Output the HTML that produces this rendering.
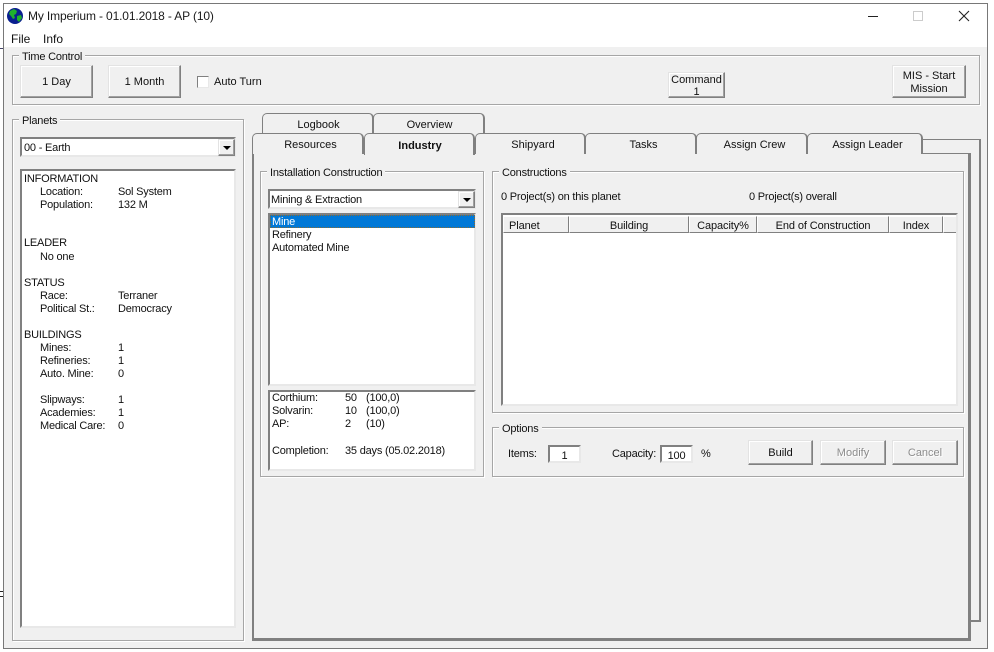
<!DOCTYPE html>
<html><head><meta charset="utf-8"><style>
html,body{margin:0;padding:0;background:#fff;width:994px;height:652px;overflow:hidden}
body{position:relative;font:11px/13px "Liberation Sans",sans-serif;color:#111;letter-spacing:-.2px}
div,span{position:absolute;box-sizing:border-box}
span{white-space:nowrap;margin-top:1px}
.grp{border:1px solid #a6a6a6;box-shadow:inset 1px 1px 0 #fff,1px 1px 0 #fff}
.lg{background:#f0f0f0;padding:0 3px;top:-6px;left:6px}
.btn{background:#f0f0f0;border:1px solid;border-color:#e3e3e3 #808080 #808080 #e3e3e3;box-shadow:inset -1px -1px 0 #a0a0a0,inset 1px 1px 0 #fff;text-align:center;letter-spacing:0}
.btn i{position:absolute;left:0;right:0;font-style:normal}
.sunk{background:#fff;border:2px solid;border-color:#808080 #e8e8e8 #e8e8e8 #808080}
.tab{background:#f0f0f0;border:1px solid #808080;border-bottom:none;border-right-width:2px;border-radius:5px 5px 0 0;text-align:center;letter-spacing:0}
.tab i{position:absolute;left:3px;right:-3px;font-style:normal;top:5px}
.th{top:216px;height:17px;background:#f0f0f0;border:1px solid;border-color:#fff #808080 #808080 #fff;text-align:center;padding-top:3px;letter-spacing:-.1px}
.arrow{width:0;height:0;border:4px solid transparent;border-top:4px solid #000;border-bottom:0}
.dis{color:#8c8c8c;text-shadow:1px 1px 0 #fff}
</style></head><body>
<!-- window -->
<div style="left:3px;top:3px;width:985px;height:646px;background:#f0f0f0;border:1px solid #787878"></div>
<div style="left:4px;top:4px;width:983px;height:43px;background:#fff"></div>
<svg style="position:absolute;left:7px;top:8px" width="16" height="16" viewBox="0 0 16 16"><circle cx="8" cy="8" r="8" fill="#0a1f8f"/><path d="M3 3L7 1L10 3L9 6L7 7L8 10L6 11L4 8L2 6Z" fill="#1fb02c"/><path d="M10 8L14 7L15 10L12 14L10 12Z" fill="#1fb02c"/></svg>
<span style="left:28px;top:9px;font-size:12px;letter-spacing:-.14px;color:#1a1a1a">My Imperium - 01.01.2018 - AP (10)</span>
<span style="left:11px;top:32px;font-size:12px;letter-spacing:0">File</span>
<span style="left:43px;top:32px;font-size:12px;letter-spacing:0">Info</span>
<svg style="position:absolute;left:860px;top:8px" width="120" height="20"><path d="M8 8.5H18" stroke="#222"/><rect x="53.5" y="3.5" width="9" height="9" fill="none" stroke="#ccc"/><path d="M99 3L109 13M109 3L99 13" stroke="#222" stroke-width="1.1"/></svg>
<div style="left:0;top:48px;width:3px;height:4px;border-top:1px solid #446"></div>
<div style="left:0;top:591px;width:3px;height:6px;border-top:1px solid #222;border-bottom:1px solid #222"></div>

<!-- time control -->
<div class="grp" style="left:12px;top:55px;width:968px;height:50px"><span class="lg">Time Control</span></div>
<div class="btn" style="left:20px;top:65px;width:73px;height:33px"><i style="top:10px">1 Day</i></div>
<div class="btn" style="left:108px;top:65px;width:73px;height:33px"><i style="top:10px">1 Month</i></div>
<div class="sunk" style="left:197px;top:76px;width:12px;height:12px;border-width:1px"></div>
<span style="left:214px;top:75px;letter-spacing:0">Auto Turn</span>
<div class="btn" style="left:668px;top:72px;width:57px;height:26px;overflow:hidden"><i style="top:1px">Command</i><i style="top:13px">1</i></div>
<div class="btn" style="left:892px;top:65px;width:74px;height:33px"><i style="top:4px">MIS - Start</i><i style="top:17px">Mission</i></div>

<!-- planets -->
<div class="grp" style="left:12px;top:119px;width:232px;height:522px"><span class="lg">Planets</span></div>
<div class="sunk" style="left:20px;top:137px;width:216px;height:20px"></div>
<span style="left:24px;top:141px">00 - Earth</span>
<div class="btn" style="left:218px;top:139px;width:17px;height:17px"><div class="arrow" style="left:4px;top:6px"></div></div>
<div class="sunk" style="left:20px;top:169px;width:216px;height:459px"></div>
<span style="left:24px;top:172px">INFORMATION</span>
<span style="left:40px;top:185px">Location:</span><span style="left:118px;top:185px">Sol System</span>
<span style="left:40px;top:198px">Population:</span><span style="left:118px;top:198px">132 M</span>
<span style="left:24px;top:236px">LEADER</span>
<span style="left:40px;top:250px">No one</span>
<span style="left:24px;top:276px">STATUS</span>
<span style="left:40px;top:289px">Race:</span><span style="left:118px;top:289px">Terraner</span>
<span style="left:40px;top:302px">Political St.:</span><span style="left:118px;top:302px">Democracy</span>
<span style="left:24px;top:328px">BUILDINGS</span>
<span style="left:40px;top:341px">Mines:</span><span style="left:118px;top:341px">1</span>
<span style="left:40px;top:354px">Refineries:</span><span style="left:118px;top:354px">1</span>
<span style="left:40px;top:367px">Auto. Mine:</span><span style="left:118px;top:367px">0</span>
<span style="left:40px;top:393px">Slipways:</span><span style="left:118px;top:393px">1</span>
<span style="left:40px;top:406px">Academies:</span><span style="left:118px;top:406px">1</span>
<span style="left:40px;top:419px">Medical Care:</span><span style="left:118px;top:419px">0</span>

<!-- tab pages -->
<div style="left:922px;top:139px;width:59px;height:483px;border:solid #808080;border-width:1px 2px 2px 0"></div>
<div class="tab" style="left:262px;top:113px;width:112px;height:21px"><i style="left:1px;right:-1px">Logbook</i></div>
<div class="tab" style="left:373px;top:113px;width:112px;height:21px"><i style="left:1px;right:-1px">Overview</i></div>
<div style="left:252px;top:153px;width:719px;height:488px;background:#f0f0f0;border:solid #808080;border-width:1px 3px 3px 2px"></div>
<div class="tab" style="left:252px;top:133px;width:112px;height:21px"><i>Resources</i></div>
<div class="tab" style="left:475px;top:133px;width:111px;height:21px"><i>Shipyard</i></div>
<div class="tab" style="left:585px;top:133px;width:112px;height:21px"><i>Tasks</i></div>
<div class="tab" style="left:696px;top:133px;width:112px;height:21px"><i>Assign Crew</i></div>
<div class="tab" style="left:807px;top:133px;width:116px;height:21px"><i>Assign Leader</i></div>
<div class="tab" style="left:364px;top:133px;width:111px;height:22px"><i style="font-weight:bold;top:6px;left:1px;right:-1px">Industry</i></div>

<!-- installation -->
<div class="grp" style="left:260px;top:171px;width:224px;height:306px"><span class="lg">Installation Construction</span></div>
<div class="sunk" style="left:268px;top:189px;width:208px;height:20px"></div>
<span style="left:271px;top:193px">Mining &amp; Extraction</span>
<div class="btn" style="left:458px;top:191px;width:17px;height:17px"><div class="arrow" style="left:4px;top:6px"></div></div>
<div class="sunk" style="left:268px;top:213px;width:208px;height:173px"></div>
<div style="left:270px;top:215px;width:205px;height:13px;background:#0078d7;outline:1px dotted #8a6a30;outline-offset:-1px"></div>
<span style="left:272px;top:215px;color:#fff">Mine</span>
<span style="left:272px;top:228px">Refinery</span>
<span style="left:272px;top:241px">Automated Mine</span>
<div class="sunk" style="left:268px;top:390px;width:208px;height:81px"></div>
<span style="left:272px;top:391px">Corthium:</span><span style="left:345px;top:391px">50</span><span style="left:366px;top:391px">(100,0)</span>
<span style="left:272px;top:404px">Solvarin:</span><span style="left:345px;top:404px">10</span><span style="left:366px;top:404px">(100,0)</span>
<span style="left:272px;top:417px">AP:</span><span style="left:345px;top:417px">2</span><span style="left:366px;top:417px">(10)</span>
<span style="left:272px;top:444px">Completion:</span><span style="left:345px;top:444px">35 days (05.02.2018)</span>

<!-- constructions -->
<div class="grp" style="left:492px;top:171px;width:472px;height:242px"><span class="lg">Constructions</span></div>
<span style="left:501px;top:190px">0 Project(s) on this planet</span>
<span style="left:749px;top:190px">0 Project(s) overall</span>
<div class="sunk" style="left:501px;top:213px;width:457px;height:193px"></div>
<div class="th" style="left:503px;width:66px;text-align:left;padding-left:5px">Planet</div>
<div class="th" style="left:569px;width:120px">Building</div>
<div class="th" style="left:689px;width:68px">Capacity%</div>
<div class="th" style="left:757px;width:132px">End of Construction</div>
<div class="th" style="left:889px;width:54px">Index</div>
<div class="th" style="left:943px;width:13px;border-right:none"></div>

<!-- options -->
<div class="grp" style="left:492px;top:427px;width:472px;height:50px"><span class="lg">Options</span></div>
<span style="left:508px;top:447px">Items:</span>
<div class="sunk" style="left:548px;top:445px;width:33px;height:18px;text-align:center;padding-top:3px">1</div>
<span style="left:612px;top:447px">Capacity:</span>
<div class="sunk" style="left:660px;top:445px;width:33px;height:18px;text-align:center;padding-top:3px">100</div>
<span style="left:701px;top:447px">%</span>
<div class="btn" style="left:748px;top:440px;width:65px;height:25px"><i style="top:6px">Build</i></div>
<div class="btn dis" style="left:820px;top:440px;width:66px;height:25px"><i style="top:6px">Modify</i></div>
<div class="btn dis" style="left:892px;top:440px;width:66px;height:25px"><i style="top:6px">Cancel</i></div>
</body></html>
